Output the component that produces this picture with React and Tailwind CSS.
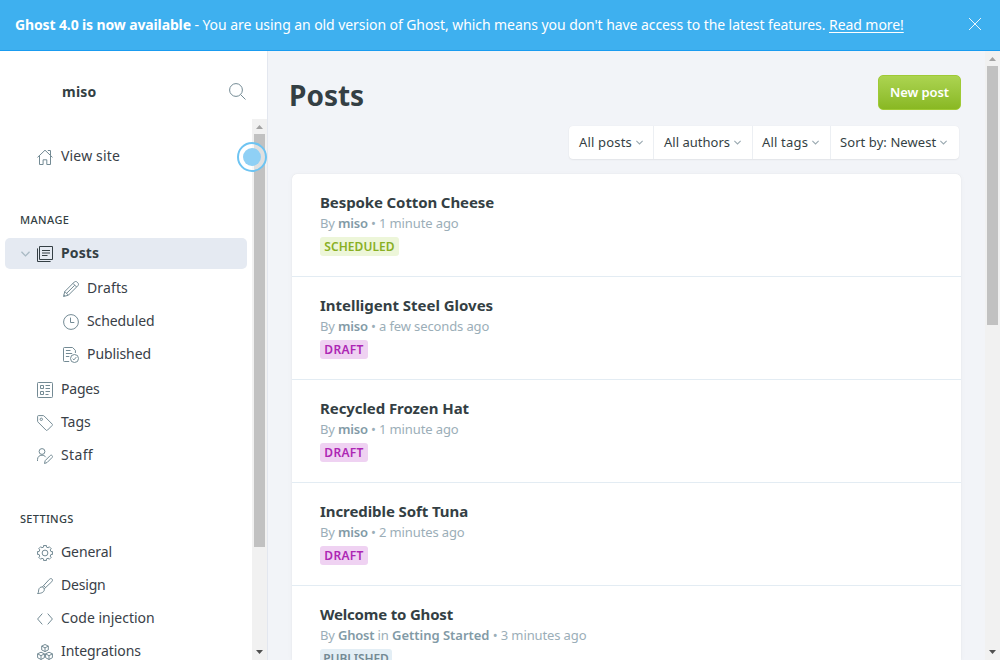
import React from "react";

// Outline of a cog with eight teeth in a 16-unit box
const gearPath =
  Array.from({ length: 8 }, (_, i) => {
    const mid = (i * Math.PI) / 4 - Math.PI / 2;
    return [[-0.23, 6.1], [-0.2, 7.6], [0.2, 7.6], [0.23, 6.1]]
      .map(([a, r]) => `${(8 + r * Math.cos(mid + a)).toFixed(2)} ${(8 + r * Math.sin(mid + a)).toFixed(2)}`)
      .join("L");
  }).reduce((d, tooth, i) => d + (i ? "L" : "M") + tooth, "") + "z";

const icons = {
  home: (
    <>
      <path d="M.5 8.400 8 1.200l7.500 7.200" />
      <path d="M10.800 1.500h2.700v4.700M2.500 7v8.500h3.600v-4.700h3.700v4.700h3.700V7" />
    </>
  ),
  posts: (
    <>
      <path d="M2.500.5h13v13h-13zM.5 2.400v13.100h13.100" />
      <path d="M5 4.500h8M5 7h8M5 9.500h5.500" />
    </>
  ),
  pencil: (
    <>
      <path d="m.5 15.500 1.300-5L11.300 1c.9-.8 2-.7 2.800.1l.8.8c.8.8.8 1.900 0 2.800L5.400 14.200z" />
      <path d="m1.800 10.500 3.600 3.700M10 2.400 13.600 6M3.600 12.300l8.200-8.100M.9 14l1.100 1.100" />
    </>
  ),
  clock: (
    <>
      <circle cx="8" cy="8" r="7.400" />
      <path d="M7.500 3.600v4.900h3.800" />
    </>
  ),
  published: (
    <>
      <path d="M6.200 14.500H1.300a.8.800 0 0 1-.8-.8V1.300C.5.800.9.500 1.300.5h8.200l2.900 2.800V6" />
      <path d="M2.900 3.500h4.600M2.900 6.500h6.300M2.900 9.500h3.400" />
      <circle cx="11.500" cy="11.500" r="4" />
      <path d="m9.700 11.700 1.200 1.200 2.400-2.800" />
    </>
  ),
  pages: (
    <>
      <rect x=".5" y=".5" width="15" height="15" rx=".8" />
      <path d="M3.500 3.500h3v3h-3zM3.500 9.500h3v3h-3zM8.500 3.500H13M8.500 6.500H13M8.500 9.500H13M8.500 12.500h3" />
    </>
  ),
  tag: (
    <>
      <path d="M.6 1.400v4.700c0 .4.1.7.4 1l8 8c.5.5 1 .5 1.500 0l4.600-4.600c.5-.5.5-1 0-1.500l-8-8a1.400 1.400 0 0 0-1-.4H1.400C.9.600.6.900.6 1.400z" />
      <circle cx="4.300" cy="4.300" r="1.200" />
    </>
  ),
  staff: (
    <>
      <circle cx="5" cy="3.500" r="2.900" />
      <path d="M.5 13V11.600c0-2.700 1.900-4.400 4.500-4.400 1.700 0 3 .8 3.800 2" />
      <path d="m7.500 15.500.7-2.900 5-5c.6-.6 1.300-.6 1.900 0s.6 1.300 0 1.900l-5 5z" />
    </>
  ),
  gear: (
    <>
      <circle cx="8" cy="8" r="2.900" />
      <path d={gearPath} />
    </>
  ),
  brush: (
    <>
      <path d="M5.300 9 12.300 1.400c.9-.9 1.900-1.100 2.700-.4.700.7.600 1.700-.2 2.700L7.200 10.900" />
      <path d="M5.300 9c1 .2 1.700.9 1.900 1.900.6 2.700-2 4.600-6.700 4.600 1.200-.9.900-2 1.200-3.600C2 10 3.500 8.700 5.300 9zM6.600 7.700l2 1.900" />
    </>
  ),
  code: <path d="M5.300 2.600.6 8l4.700 5.400M10.700 2.600 15.400 8l-4.700 5.400" />,
  blocks: (
    <>
      <path d="m8 .5 3.300 1.600v3.800L8 7.600 4.700 5.900V2.100zM4.700 2.100 8 3.900l3.300-1.800M8 3.900v3.700" />
      <path d="m4 8.200 3.400 1.600v3.900L4 15.500.6 13.700V9.800zM.6 9.800 4 11.700l3.400-1.900M4 11.700v3.800" />
      <path d="m12 8.200 3.400 1.600v3.900L12 15.500l-3.400-1.800V9.800zM8.600 9.800l3.400 1.900 3.400-1.900M12 11.700v3.800" />
    </>
  ),
};

function Icon({ name, className = "" }) {
  return (
    <svg viewBox="0 0 16 16" className={"size-4 shrink-0 " + className} fill="none" stroke="currentColor" strokeWidth="1" strokeLinejoin="round">
      {icons[name]}
    </svg>
  );
}

function Chevron({ className }) {
  return (
    <svg viewBox="0 0 10 6" className={className} fill="none" stroke="currentColor" strokeWidth="1.500">
      <path d="m.5.6 4.500 4.500L9.500.6" />
    </svg>
  );
}

function NavItem({ icon, label, sub, track = "" }) {
  return (
    <a className={"flex h-[33px] shrink-0 items-center gap-2 pb-[2px] text-sm text-[#394047] " + (sub ? "pl-[63px]" : "pl-[37px]")}>
      <Icon name={icon} className="mt-[3px] text-[#738a94]" />
      <span className={track}>{label}</span>
    </a>
  );
}

function Scrollbar({ thumb }) {
  return (
    <div className="flex w-[15px] shrink-0 flex-col items-center bg-[#f1f1f1]">
      <svg viewBox="0 0 15 15" className="size-[15px] shrink-0"><path d="M4 10h7L7.500 6z" fill="#a3a3a3" /></svg>
      <div className={"w-[11px] bg-[#c1c1c1] " + thumb} />
      <svg viewBox="0 0 15 15" className="mt-auto size-[15px] shrink-0"><path d="M4 5h7L7.500 9z" fill="#505050" /></svg>
    </div>
  );
}

function Filter({ label, width, track }) {
  return (
    <div className={"flex items-center border-r border-[#eceff3] last:border-r-0 " + width}>
      <span className={track}>{label}</span>
      <Chevron className="ml-[4px] h-[5px] w-[7px] text-[#9aa9b1]" />
    </div>
  );
}

const badgeStyles = {
  SCHEDULED: "bg-[#edf6d9] text-[#89af23] w-[79px] tracking-[0.05px]",
  DRAFT: "bg-[#efd2f2] text-[#ad26b4] w-[48px] tracking-[0.3px]",
  PUBLISHED: "bg-[#e3eef5] text-[#738a94] w-[72px] tracking-[-0.1px]",
};

const posts = [
  { title: "Bespoke Cotton Cheese", track: "tracking-[-0.11px]", author: "miso", time: "1 minute ago", status: "SCHEDULED" },
  { title: "Intelligent Steel Gloves", track: "tracking-[-0.02px]", author: "miso", time: "a few seconds ago", status: "DRAFT" },
  { title: "Recycled Frozen Hat", track: "tracking-[-0.08px]", author: "miso", time: "1 minute ago", status: "DRAFT" },
  { title: "Incredible Soft Tuna", track: "tracking-[-0.08px]", author: "miso", time: "2 minutes ago", status: "DRAFT" },
  { title: "Welcome to Ghost", track: "tracking-[-0.19px]", author: "Ghost", tag: "Getting Started", time: "3 minutes ago", status: "PUBLISHED" },
];

function PostRow({ post }) {
  return (
    <li className="flex h-[103px] shrink-0 flex-col items-start border-b border-[#e3ecf3] pt-[17px] pl-7">
      <h3 className={"text-[15px] leading-[22px] font-bold text-[#343f44] " + post.track}>{post.title}</h3>
      <p className="text-[13px] leading-[20px] tracking-[-0.12px] whitespace-pre text-[#9baeb8]">
        By <b className="font-semibold tracking-[-0.25px] text-[#829aa6]">{post.author}</b>
        {post.tag && <> in <b className="font-semibold tracking-[-0.02px] text-[#829aa6]">{post.tag}</b></>} • {post.time}
      </p>
      <span className={"mt-[4px] flex h-[19px] items-center justify-center rounded-[3px] text-xs font-semibold " + badgeStyles[post.status]}>{post.status}</span>
    </li>
  );
}

export default function App() {
  return (
    <div className="relative flex h-[660px] w-[1000px] flex-col overflow-hidden bg-white font-['Noto_Sans',sans-serif]">
      <header className="flex h-[51px] shrink-0 items-center justify-between border-b border-[#1a9cf0] bg-[#3eb0ef] pr-[19px] pl-[15px] text-sm whitespace-pre text-white">
        <p>
          <b className="font-bold tracking-[-0.13px]">Ghost 4.0 is now available</b>
          <span className="tracking-[-0.07px]"> - You are using an old version of Ghost, which means you don't have access to the latest features. </span>
          <a className="tracking-[-0.07px] underline underline-offset-2">Read more!</a>
        </p>
        <svg viewBox="0 0 12 12" className="mb-[2px] size-3" fill="none" stroke="white" strokeWidth=".9"><path d="m0 0 12 12M12 0 0 12" /></svg>
      </header>

      <div className="flex min-h-0 flex-1">
        <aside className="flex w-[268px] shrink-0 flex-col border-r border-[#e3e7ef] bg-white">
          <div className="flex h-[68px] shrink-0 items-start justify-between pt-[31px] pr-[21px] pl-[62px]">
            <span className="text-sm font-bold tracking-[0.25px] text-[#343f44]">miso</span>
            <svg viewBox="0 0 17 17" className="mt-px size-[17px]" fill="none" stroke="#738a94" strokeWidth="1">
              <circle cx="7" cy="7" r="6.400" /><path d="m11.700 11.700 4.800 4.800" />
            </svg>
          </div>
          <div className="flex min-h-0 flex-1">
            <nav className="flex min-w-0 flex-1 flex-col overflow-hidden pt-[21px]">
              <NavItem icon="home" label="View site" track="tracking-[0.17px]" />
              <h2 className="mt-[38px] shrink-0 pl-5 text-[11px] leading-[18px] font-medium tracking-[0.4px] text-[#343f44]">MANAGE</h2>
              <a className="mt-[9px] ml-[5px] flex h-[31px] w-[242px] shrink-0 items-center rounded-[5px] bg-[#e5eaf2] pl-4 text-sm font-bold text-[#343f44]">
                <Chevron className="mt-px mr-[7px] h-[6px] w-[9px] text-[#a9bac4]" />
                <Icon name="posts" className="mt-px mr-2" />
                <span className="-mt-px tracking-[0.1px]">Posts</span>
              </a>
              <div className="shrink-0 pt-[3px] pb-[2px]">
                <NavItem sub icon="pencil" label="Drafts" track="tracking-[0.13px]" />
                <NavItem sub icon="clock" label="Scheduled" track="tracking-[-0.09px]" />
                <NavItem sub icon="published" label="Published" track="tracking-[-0.09px]" />
              </div>
              <NavItem icon="pages" label="Pages" track="tracking-[-0.2px]" />
              <NavItem icon="tag" label="Tags" track="tracking-[-0.07px]" />
              <NavItem icon="staff" label="Staff" track="tracking-[0.36px]" />
              <h2 className="mt-[38px] mb-[8px] shrink-0 pl-5 text-[11px] leading-[18px] font-medium tracking-[0.29px] text-[#343f44]">SETTINGS</h2>
              <NavItem icon="gear" label="General" track="tracking-[-0.09px]" />
              <NavItem icon="brush" label="Design" track="tracking-[-0.2px]" />
              <NavItem icon="code" label="Code injection" />
              <NavItem icon="blocks" label="Integrations" track="tracking-[-0.07px]" />
            </nav>
            <Scrollbar thumb="h-[413px]" />
          </div>
        </aside>

        <main className="flex min-w-0 flex-1 flex-col overflow-hidden bg-[#f2f4f8] pr-6 pl-6">
          <div className="mt-6 flex h-[35px] shrink-0 items-center justify-between">
            <h1 className="-ml-[3px] mt-[5px] text-[28px] leading-[35px] font-bold text-[#343f44]">Posts</h1>
            <button className="h-[35px] w-[83px] rounded-[5px] border border-[#9fca35] bg-linear-to-b from-[#acd450] to-[#89b822] text-[13px] font-semibold tracking-[-0.09px] whitespace-nowrap text-white">New post</button>
          </div>
          <div className="mt-4 mr-[2px] flex h-[33px] shrink-0 self-end rounded-[4px] bg-white pl-[10px] text-[13px] text-[#343f44] shadow-[0_0_1px_rgba(0,0,0,0.08),0_1px_2px_rgba(0,0,0,0.06)]">
            <Filter label="All posts" width="w-[75px] mr-[10px]" track="tracking-[0.18px]" />
            <Filter label="All authors" width="w-[89px] mr-[9px]" track="tracking-[0.01px]" />
            <Filter label="All tags" width="w-[69px] mr-[9px]" track="tracking-[0.18px]" />
            <Filter label="Sort by: Newest" width="w-[119px]" track="tracking-[0.08px]" />
          </div>
          <ul className="mt-[15px] flex min-h-0 flex-1 flex-col rounded-t-[5px] bg-white shadow-[0_0_1px_rgba(0,0,0,0.12),0_1px_6px_rgba(0,0,0,0.03)]">
            {posts.map((p) => <PostRow key={p.title} post={p} />)}
          </ul>
        </main>
        <Scrollbar thumb="h-[259px]" />
      </div>

      <div className="absolute top-[142px] left-[237px] flex size-[30px] items-center justify-center rounded-full border-2 border-[#6ec4f2] bg-white/50">
        <div className="size-[18px] rounded-full bg-[#8fd0f5]" />
      </div>
    </div>
  );
}
